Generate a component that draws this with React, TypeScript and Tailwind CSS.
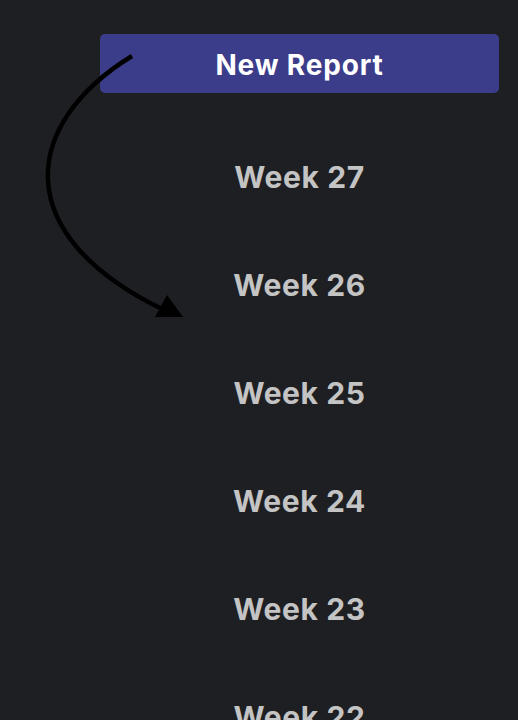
import React from 'react';

const weeks = [27, 26, 25, 24, 23, 22];

export default function App() {
  return (
    <div className="relative w-[518px] h-[720px] overflow-hidden bg-[#1e1f23]" style={{ fontFamily: 'Inter, "Liberation Sans", sans-serif' }}>
      <div className="flex flex-col pl-[100px] pt-[34px] w-[499px]">
        <button className="h-[59px] w-[399px] rounded-[5px] bg-[#3b3d8a] text-white text-[28px] tracking-[0.03em] font-bold flex items-center justify-center pt-[2px]">
          New Report
        </button>
        <div className="flex flex-col mt-[30px]">
          {weeks.map((w) => (
            <div key={w} className="h-[108px] flex items-center justify-center text-[30px] tracking-[0.02em] font-bold text-[#c4c4c4]">
              Week {w}
            </div>
          ))}
        </div>
      </div>
      <svg className="absolute left-0 top-0 pointer-events-none" width="518" height="720" viewBox="0 0 518 720">
        <path d="M132 56 C 20 125, 10 235, 162 309" fill="none" stroke="#000" strokeWidth="4.5" />
        <polygon points="155,317 183,317 167,295" fill="#000" />
      </svg>
    </div>
  );
}
